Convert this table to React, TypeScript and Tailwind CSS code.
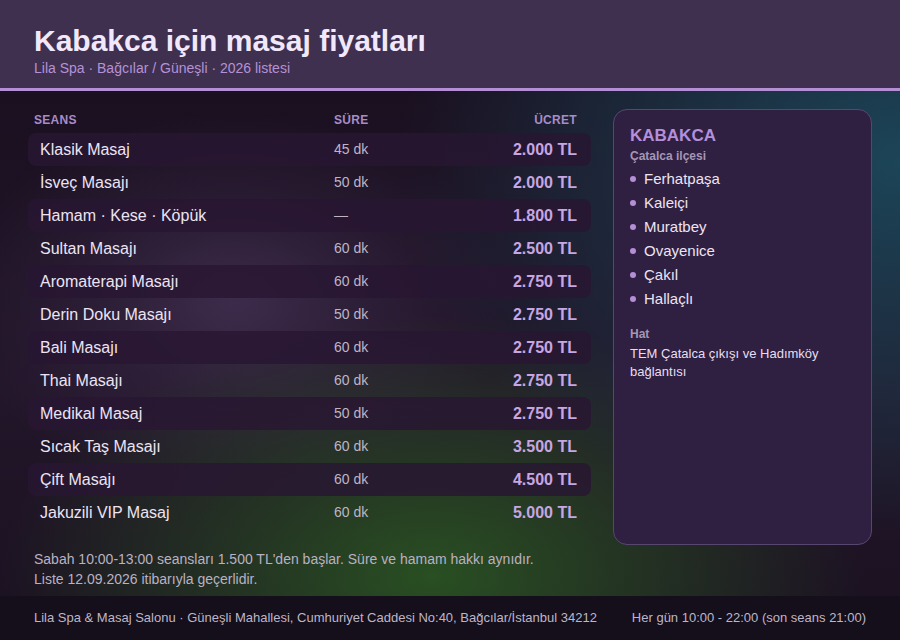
const rows = [
  { name: "Klasik Masaj", time: "45 dk", price: "2.000 TL" },
  { name: "İsveç Masajı", time: "50 dk", price: "2.000 TL" },
  { name: "Hamam · Kese · Köpük", time: "—", price: "1.800 TL" },
  { name: "Sultan Masajı", time: "60 dk", price: "2.500 TL" },
  { name: "Aromaterapi Masajı", time: "60 dk", price: "2.750 TL" },
  { name: "Derin Doku Masajı", time: "50 dk", price: "2.750 TL" },
  { name: "Bali Masajı", time: "60 dk", price: "2.750 TL" },
  { name: "Thai Masajı", time: "60 dk", price: "2.750 TL" },
  { name: "Medikal Masaj", time: "50 dk", price: "2.750 TL" },
  { name: "Sıcak Taş Masajı", time: "60 dk", price: "3.500 TL" },
  { name: "Çift Masajı", time: "60 dk", price: "4.500 TL" },
  { name: "Jakuzili VIP Masaj", time: "60 dk", price: "5.000 TL" },
];

const districts = ["Ferhatpaşa", "Kaleiçi", "Muratbey", "Ovayenice", "Çakıl", "Hallaçlı"];

export default function App() {
  return (
    <div className="flex h-[640px] w-[900px] flex-col overflow-hidden bg-[#1a1120] font-['Liberation_Sans',Arial,sans-serif]">
      <header className="h-[91px] shrink-0 border-b-[3px] border-[#b48fd6] bg-[#3f3050] px-[34px] pt-[23px]">
        <h1 className="text-[30px] leading-[35px] font-bold text-[#f2e8fb]">Kabakca için masaj fiyatları</h1>
        <p className="mt-[1px] text-[14px] leading-[18px] text-[#b592d6]">Lila Spa · Bağcılar / Güneşli · 2026 listesi</p>
      </header>

      <main className="flex flex-1 flex-col bg-[radial-gradient(ellipse_500px_380px_at_100%_14%,#1c4558_0%,rgba(28,69,88,0.55)_45%,transparent_100%),radial-gradient(ellipse_430px_260px_at_48%_96%,#294f22_0%,rgba(41,79,34,0.5)_50%,transparent_100%),radial-gradient(ellipse_280px_190px_at_26%_42%,#3d2b4b_0%,rgba(61,43,75,0.4)_50%,transparent_100%),linear-gradient(180deg,#1a1020,#22162a_60%,#1c1222)]">
        <div className="flex flex-1 gap-[22px] pl-[28px] pr-[28px] pt-[18px]">
          <section className="w-[563px]">
            <div className="flex h-[22px] items-center pl-[6px] pr-[14px] text-[12px] font-bold tracking-[0.3px] text-[#a88cc8]">
              <span className="w-[300px]">SEANS</span>
              <span>SÜRE</span>
              <span className="ml-auto">ÜCRET</span>
            </div>
            <div className="mt-[2px] flex flex-col">
              {rows.map((r, i) => (
                <div
                  key={r.name}
                  className={`flex h-[33px] items-center rounded-[8px] pl-[12px] pr-[14px] ${i % 2 === 0 ? "bg-[rgba(40,22,50,0.82)]" : ""}`}
                >
                  <span className="w-[294px] text-[16px] text-[#ece4f3]">{r.name}</span>
                  <span className="text-[14px] text-[#bdb5c6]">{r.time}</span>
                  <span className="ml-auto text-[16px] font-bold text-[#c7a6e2]">{r.price}</span>
                </div>
              ))}
            </div>
          </section>

          <aside className="h-[436px] w-[259px] rounded-[14px] border border-[#574770] bg-[#2f1f40] px-[16px] pt-[15px]">
            <h2 className="text-[17px] leading-[22px] font-bold text-[#b38fdc]">KABAKCA</h2>
            <p className="mt-[1px] text-[12px] leading-[16px] font-bold text-[#a696b6]">Çatalca ilçesi</p>
            <ul className="mt-[3px] flex flex-col">
              {districts.map((d) => (
                <li key={d} className="flex h-[24px] items-center gap-[8px] text-[15px] text-[#ece4f3]">
                  <span className="h-[6px] w-[6px] rounded-full bg-[#b48fd6]" />
                  {d}
                </li>
              ))}
            </ul>
            <p className="mt-[15px] text-[12px] leading-[16px] font-bold text-[#a696b6]">Hat</p>
            <p className="mt-[3px] text-[13px] leading-[18px] text-[#e6def0]">TEM Çatalca çıkışı ve Hadımköy bağlantısı</p>
          </aside>
        </div>

        <div className="px-[34px] pb-[7px] text-[14px] leading-[20px] text-[#b9b1c3]">
          <p>Sabah 10:00-13:00 seansları 1.500 TL'den başlar. Süre ve hamam hakkı aynıdır.</p>
          <p>Liste 12.09.2026 itibarıyla geçerlidir.</p>
        </div>
      </main>

      <footer className="flex h-[44px] shrink-0 items-center justify-between bg-[#150e1b] px-[34px] text-[13px] text-[#beb6c8]">
        <span>Lila Spa &amp; Masaj Salonu · Güneşli Mahallesi, Cumhuriyet Caddesi No:40, Bağcılar/İstanbul 34212</span>
        <span>Her gün 10:00 - 22:00 (son seans 21:00)</span>
      </footer>
    </div>
  );
}
